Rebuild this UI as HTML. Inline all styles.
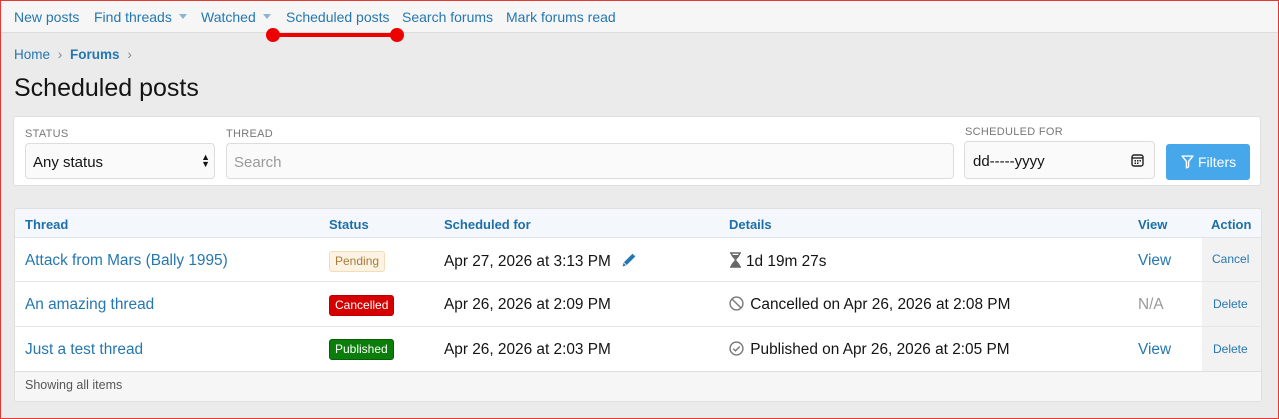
<!DOCTYPE html>
<html><head><meta charset="utf-8"><style>
*{box-sizing:border-box;margin:0;padding:0}
body{width:1279px;height:419px;overflow:hidden;background:#ebebeb;font-family:"Liberation Sans",sans-serif;position:relative;color:#141414}
.frame{position:absolute;left:0;top:0;width:1279px;height:419px;border:1px solid #e53935;pointer-events:none;z-index:10}
.nav{position:absolute;left:0;top:0;width:1279px;height:33px;background:#f6f6f6;border-bottom:1px solid #dcdcdc}
.nav span{position:absolute;top:9px;font-size:14px;color:#2577b1;white-space:nowrap}
.caret{display:inline-block;width:0;height:0;border-left:4px solid transparent;border-right:4px solid transparent;border-top:5px solid #8fb3d4;margin-left:7px;vertical-align:3px}
.abs{position:absolute;white-space:nowrap}
.panel{position:absolute;background:#fff;border:1px solid #dfdfdf;border-radius:3px}
.lbl{font-size:11px;color:#777;letter-spacing:.3px}
.inp{position:absolute;background:#fafafa;border:1px solid #ddd;border-radius:4px;font-size:15px}
.th{font-size:13px;font-weight:bold;color:#1d6fa9;top:217px}
.row{position:absolute;left:15px;width:1245px;border-top:1px solid #e6e6e6}
.link{color:#2577b1}
.badge{position:absolute;font-size:12px;padding:2px 5px;border-radius:3px;line-height:15px}
.cell{font-size:15.4px}
</style></head><body>
<div class="nav">
<span style="left:14px">New posts</span>
<span style="left:94px">Find threads<i class="caret"></i></span>
<span style="left:201px">Watched<i class="caret"></i></span>
<span style="left:286px">Scheduled posts</span>
<span style="left:402px">Search forums</span>
<span style="left:506px">Mark forums read</span>
</div>
<div class="abs" style="left:273px;top:33px;width:125px;height:4px;background:#e00;"></div>
<div class="abs" style="left:266px;top:28px;width:14px;height:14px;border-radius:50%;background:#e00"></div>
<div class="abs" style="left:390px;top:28px;width:14px;height:14px;border-radius:50%;background:#e00"></div>

<div class="abs" style="left:14px;top:47px;font-size:13.5px;color:#2577b1">Home <span style="color:#888;margin:0 4px">›</span> <b>Forums</b> <span style="color:#888;margin-left:4px">›</span></div>
<div class="abs" style="left:14px;top:74px;font-size:25px;color:#141414">Scheduled posts</div>

<div class="panel" style="left:13px;top:116px;width:1248px;height:70px"></div>
<div class="abs lbl" style="left:25px;top:128px">STATUS</div>
<div class="abs lbl" style="left:226px;top:128px">THREAD</div>
<div class="abs lbl" style="left:965px;top:126px">SCHEDULED FOR</div>
<div class="inp" style="left:25px;top:143px;width:190px;height:36px;padding:10px 7px">Any status<span style="position:absolute;right:4px;top:10px;font-size:9px;line-height:7px">▲<br>▼</span></div>
<div class="inp" style="left:226px;top:143px;width:728px;height:36px;padding:10px 7px;color:#9a9a9a">Search</div>
<div class="inp" style="left:964px;top:141px;width:191px;height:38px;padding:11px 8px">dd-----yyyy
<svg style="position:absolute;right:10px;top:12px" width="13" height="13" viewBox="0 0 13 13"><rect x="1" y="1" width="11" height="11" rx="2" fill="none" stroke="#222" stroke-width="1.4"/><line x1="1" y1="4" x2="12" y2="4" stroke="#222" stroke-width="1.4"/><rect x="3.5" y="6" width="1.5" height="1.5" fill="#222"/><rect x="6" y="6" width="1.5" height="1.5" fill="#222"/><rect x="8.5" y="6" width="1.5" height="1.5" fill="#222"/><rect x="3.5" y="8.5" width="1.5" height="1.5" fill="#222"/><rect x="6" y="8.5" width="1.5" height="1.5" fill="#222"/></svg></div>
<div class="abs" style="left:1166px;top:144px;width:84px;height:36px;background:#47a7eb;border-radius:3px;color:#fff;font-size:14px;padding:10px 0 0 15px">
<svg width="13" height="14" viewBox="0 0 12 13" style="vertical-align:-2px;margin-right:4px"><path d="M1 1h10L7 6v5l-2 1V6z" fill="none" stroke="#fff" stroke-width="1.3" stroke-linejoin="round"/></svg>Filters</div>

<div class="panel" style="left:14px;top:208px;width:1248px;height:194px;overflow:hidden">
<div style="position:absolute;left:0;top:0;width:100%;height:29px;background:#f4f8fc;border-bottom:1px solid #dde4ea"></div>
<div style="position:absolute;left:1187px;top:29px;width:60px;height:133px;background:#f2f2f2"></div>
<div style="position:absolute;left:0;top:162px;width:100%;height:32px;background:#f6f6f6;border-top:1px solid #dedede"></div>
</div>
<div class="abs th" style="left:25px">Thread</div>
<div class="abs th" style="left:329px">Status</div>
<div class="abs th" style="left:444px">Scheduled for</div>
<div class="abs th" style="left:729px">Details</div>
<div class="abs th" style="left:1138px">View</div>
<div class="abs th" style="left:1211px">Action</div>

<div class="row" style="top:281px"></div>
<div class="row" style="top:326px"></div>

<div class="abs cell link" style="left:25px;top:252px">Attack from Mars (Bally 1995)</div>
<div class="badge" style="left:329px;top:251px;background:#fdf3e3;border:1px solid #f3dcb8;color:#a87b3c">Pending</div>
<div class="abs cell" style="left:444px;top:252px">Apr 27, 2026 at 3:13 PM <svg width="16" height="16" viewBox="0 0 16 16" style="margin-left:6px;vertical-align:-2px"><path d="M1.5 14.5l1.2-4L11.5 1.7l2.8 2.8L5.5 13.3z" fill="#2577b1"/><path d="M2.7 10.5l2.8 2.8" stroke="#fff" stroke-width="0.8"/></svg></div>
<div class="abs cell" style="left:729px;top:252px"><svg width="13" height="16" viewBox="0 0 13 16" style="vertical-align:-2px;margin-right:4px"><path d="M1 1h11M1 15h11M2.5 1c0 4 4 5 4 7s-4 3-4 7M10.5 1c0 4-4 5-4 7s4 3 4 7" fill="none" stroke="#666" stroke-width="1.5"/><path d="M3 14.5c1-3 3-4 3.5-5 0.5 1 2.5 2 3.5 5zM3.5 3h6c-1 2-3 3-3 3s-2-1-3-3z" fill="#666"/></svg>1d 19m 27s</div>
<div class="abs cell link" style="left:1138px;top:252px">View</div>
<div class="abs link" style="left:1212px;top:252px;font-size:12px">Cancel</div>

<div class="abs cell link" style="left:25px;top:296px">An amazing thread</div>
<div class="badge" style="left:329px;top:295px;background:#d50000;color:#fff;border:1px solid #b00">Cancelled</div>
<div class="abs cell" style="left:444px;top:296px">Apr 26, 2026 at 2:09 PM</div>
<div class="abs cell" style="left:729px;top:296px"><svg width="15" height="15" viewBox="0 0 14 14" style="vertical-align:-2px;margin-right:2px"><circle cx="7" cy="7" r="6" fill="none" stroke="#777" stroke-width="1.3"/><line x1="3" y1="3" x2="11" y2="11" stroke="#777" stroke-width="1.3"/></svg> Cancelled on Apr 26, 2026 at 2:08 PM</div>
<div class="abs cell" style="left:1138px;top:296px;color:#999">N/A</div>
<div class="abs link" style="left:1213px;top:297px;font-size:12px">Delete</div>

<div class="abs cell link" style="left:25px;top:341px">Just a test thread</div>
<div class="badge" style="left:329px;top:339px;background:#0a7d0a;color:#fff;border:1px solid #066006">Published</div>
<div class="abs cell" style="left:444px;top:341px">Apr 26, 2026 at 2:03 PM</div>
<div class="abs cell" style="left:729px;top:341px"><svg width="15" height="15" viewBox="0 0 14 14" style="vertical-align:-2px;margin-right:2px"><circle cx="7" cy="7" r="6" fill="none" stroke="#777" stroke-width="1.3"/><path d="M4 7.2l2 2 4-4" fill="none" stroke="#777" stroke-width="1.3"/></svg> Published on Apr 26, 2026 at 2:05 PM</div>
<div class="abs cell link" style="left:1138px;top:341px">View</div>
<div class="abs link" style="left:1213px;top:342px;font-size:12px">Delete</div>

<div class="abs" style="left:25px;top:378px;font-size:12.5px;color:#555">Showing all items</div>
<div class="frame"></div>
</body></html>
